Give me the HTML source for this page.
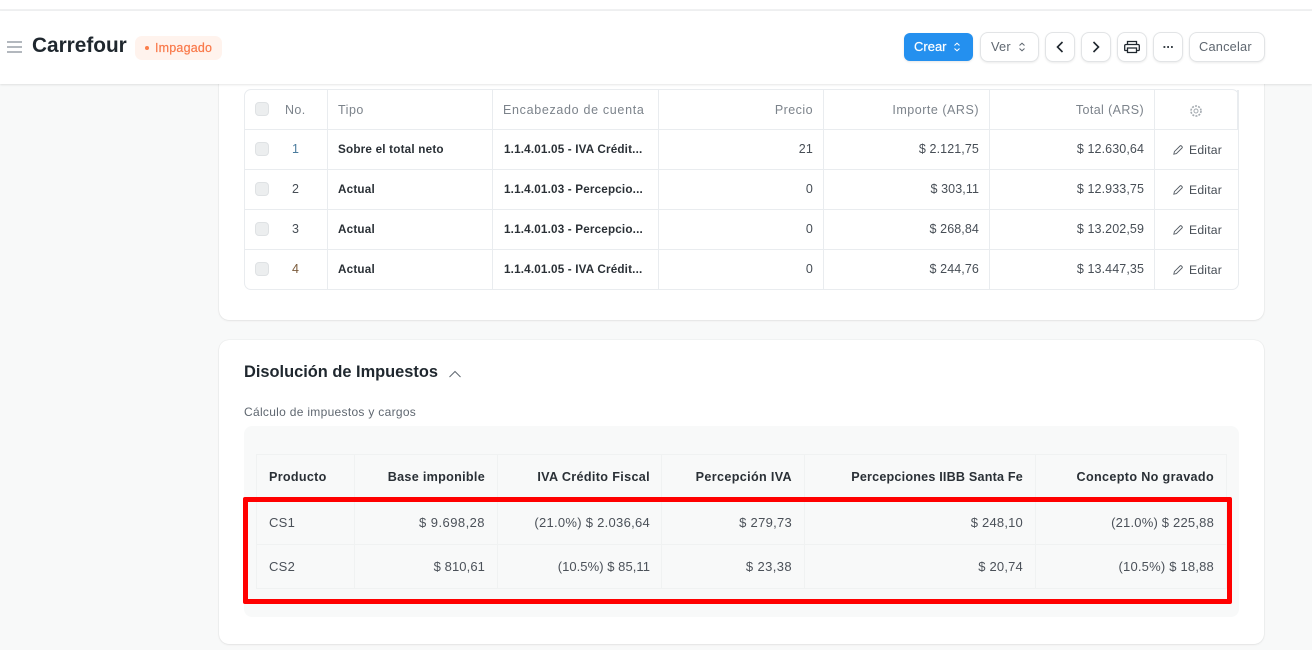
<!DOCTYPE html>
<html><head><meta charset="utf-8"><style>
*{box-sizing:border-box}
html,body{margin:0;padding:0}
body{width:1312px;height:650px;overflow:hidden;position:relative;background:#f8f9f9;font-family:"Liberation Sans",sans-serif;color:#474e56}
.a{position:absolute}
.t{position:absolute;white-space:nowrap;font-size:12.5px;line-height:16px;letter-spacing:.2px}
.r{text-align:right}
.card{position:absolute;left:219px;width:1045px;background:#fff;border-radius:10px;box-shadow:0 0 1px rgba(0,0,0,.18),0 1px 2px rgba(0,0,0,.06)}
.btn{position:absolute;top:32px;height:30px;background:#fff;border-radius:8px;border:1px solid #e2e4e6;box-shadow:0 1px 2px rgba(0,0,0,.08)}
.h{background:#e9ecef}
.cb{position:absolute;left:255px;width:14px;height:14px;background:#eceeef;border:1px solid #dfe2e4;border-radius:4px}
.hd{color:#7c838b}
.b{font-weight:700;font-size:11.7px;color:#2a3036;letter-spacing:.2px}
.th{font-weight:700;color:#2a3036;font-size:12.6px;letter-spacing:.3px}
.v{font-size:13px;letter-spacing:.28px;color:#4b5159}
svg{position:absolute;overflow:visible}
</style></head><body>

<!-- top strip + header -->
<div class="a" style="left:0;top:0;width:1312px;height:10px;background:#fff"></div>
<div class="a" style="left:0;top:9px;width:1312px;height:2px;background:#f0f1f2"></div>
<div class="a" style="left:0;top:11px;width:1312px;height:73px;background:#fff;box-shadow:0 1px 2px rgba(0,0,0,.1);z-index:5"></div>

<div style="position:absolute;z-index:6;left:0;top:0;width:1312px;height:85px">
<svg style="left:7px;top:41px" width="15" height="12"><path d="M0 1h15M0 6h15M0 11h15" stroke="#9aa1a8" stroke-width="1.4" fill="none"/></svg>
<div class="t" style="left:32px;top:33px;font-size:20.8px;line-height:26px;font-weight:700;color:#1f272e;letter-spacing:0">Carrefour</div>
<div class="a" style="left:135px;top:36px;width:87px;height:24px;border-radius:7px;background:#fff3ed"></div>
<div class="a" style="left:145px;top:46px;width:4px;height:4px;border-radius:50%;background:#fb7e4b"></div>
<div class="t" style="left:155px;top:40px;font-size:12.5px;font-weight:400;color:#f9794a;letter-spacing:.2px;-webkit-text-stroke:.2px #f9794a">Impagado</div>

<div class="a" style="left:904px;top:33px;width:69px;height:28px;background:#2490ef;border-radius:6px;box-shadow:0 1px 2px rgba(0,0,0,.1)"></div>
<div class="t" style="left:914px;top:39px;color:#fff;font-size:13px;-webkit-text-stroke:.2px #fff;letter-spacing:0">Crear</div>
<svg style="left:953px;top:42px" width="8" height="10"><path d="M1.5 3.5L4 1.2 6.5 3.5M1.5 6.5L4 8.8 6.5 6.5" stroke="#fff" stroke-width="1" fill="none"/></svg>

<div class="btn" style="left:980px;width:59px"></div>
<div class="t" style="left:991px;top:39px;font-size:12.8px;color:#5f6770;letter-spacing:.2px">Ver</div>
<svg style="left:1018px;top:42px" width="8" height="10"><path d="M1.5 3.5L4 1.2 6.5 3.5M1.5 6.5L4 8.8 6.5 6.5" stroke="#5f6770" stroke-width="1" fill="none"/></svg>

<div class="btn" style="left:1045px;width:30px"></div>
<svg style="left:1045px;top:32px" width="30" height="30"><path d="M17.5 10L12.5 15 17.5 20" stroke="#1f272e" stroke-width="1.6" fill="none"/></svg>
<div class="btn" style="left:1081px;width:30px"></div>
<svg style="left:1081px;top:32px" width="30" height="30"><path d="M12.5 10L17.5 15 12.5 20" stroke="#1f272e" stroke-width="1.6" fill="none"/></svg>
<div class="btn" style="left:1117px;width:30px"></div>
<svg style="left:1117px;top:32px" width="30" height="30"><path d="M10.5 12.5V9.5h9v3M10.5 18.5H8.5a.8.8 0 0 1-.8-.8v-3.9c0-.8.6-1.3 1.3-1.3h12c.7 0 1.3.5 1.3 1.3v3.9a.8.8 0 0 1-.8.8h-2M10.5 16h9v4.5h-9z" stroke="#1f272e" stroke-width="1.3" fill="none"/></svg>
<div class="btn" style="left:1153px;width:30px"></div>
<svg style="left:1153px;top:32px" width="30" height="30"><path d="M10.5 15h1.8M14.2 15h1.8M18 15h1.8" stroke="#1f272e" stroke-width="1.7" fill="none"/></svg>
<div class="btn" style="left:1189px;width:76px"></div>
<div class="t" style="left:1199px;top:39px;font-size:12.8px;color:#5f6770;letter-spacing:.2px">Cancelar</div>
</div>

<!-- Card 1 -->
<div class="card" style="top:60px;height:260px"></div>
<div class="a" style="left:244px;top:89px;width:995px;height:201px;border:1px solid #e9ecef;border-radius:7px;background:#fff"></div>
<div class="a h" style="left:245px;top:129px;width:993px;height:1px"></div>
<div class="a h" style="left:245px;top:169px;width:993px;height:1px"></div>
<div class="a h" style="left:245px;top:209px;width:993px;height:1px"></div>
<div class="a h" style="left:245px;top:249px;width:993px;height:1px"></div>
<div class="a h" style="left:327px;top:90px;width:1px;height:199px"></div>
<div class="a h" style="left:492px;top:90px;width:1px;height:199px"></div>
<div class="a h" style="left:658px;top:90px;width:1px;height:199px"></div>
<div class="a h" style="left:823px;top:90px;width:1px;height:199px"></div>
<div class="a h" style="left:989px;top:90px;width:1px;height:199px"></div>
<div class="a h" style="left:1154px;top:90px;width:1px;height:199px"></div>
<div class="a h" style="left:1237px;top:90px;width:2px;height:40px"></div>

<div class="cb" style="top:102px"></div><div class="cb" style="top:142px"></div><div class="cb" style="top:182px"></div><div class="cb" style="top:222px"></div><div class="cb" style="top:262px"></div>

<div class="t hd" style="left:285px;top:102px;letter-spacing:.4px">No.</div>
<div class="t hd" style="left:338px;top:102px;letter-spacing:.5px">Tipo</div>
<div class="t hd" style="left:503px;top:102px;letter-spacing:.68px">Encabezado de cuenta</div>
<div class="t hd r" style="right:499px;top:102px;letter-spacing:.45px">Precio</div>
<div class="t hd r" style="right:333px;top:102px;letter-spacing:.52px">Importe (ARS)</div>
<div class="t hd r" style="right:168px;top:102px;letter-spacing:.38px">Total (ARS)</div>
<svg style="left:1189px;top:104px" width="14" height="14" viewBox="0 0 14 14"><circle cx="7" cy="7" r="2" stroke="#a4aab0" fill="none"/><circle cx="7" cy="7" r="5" stroke="#a4aab0" stroke-width="1.6" stroke-dasharray="2 1.2" fill="none"/></svg>

<!-- rows -->
<div class="t" style="left:292px;top:141px;color:#4a7b9c">1</div>
<div class="t b" style="left:338px;top:142px">Sobre el total neto</div>
<div class="t b" style="left:504px;top:142px;letter-spacing:.17px">1.1.4.01.05 - IVA Crédit...</div>
<div class="t r" style="right:499px;top:141px">21</div>
<div class="t r" style="right:333px;top:141px;letter-spacing:.1px">$ 2.121,75</div>
<div class="t r" style="right:168px;top:141px;letter-spacing:.1px">$ 12.630,64</div>

<div class="t" style="left:292px;top:181px">2</div>
<div class="t b" style="left:338px;top:182px">Actual</div>
<div class="t b" style="left:504px;top:182px;letter-spacing:.17px">1.1.4.01.03 - Percepcio...</div>
<div class="t r" style="right:499px;top:181px">0</div>
<div class="t r" style="right:333px;top:181px;letter-spacing:.1px">$ 303,11</div>
<div class="t r" style="right:168px;top:181px;letter-spacing:.1px">$ 12.933,75</div>

<div class="t" style="left:292px;top:221px">3</div>
<div class="t b" style="left:338px;top:222px">Actual</div>
<div class="t b" style="left:504px;top:222px;letter-spacing:.17px">1.1.4.01.03 - Percepcio...</div>
<div class="t r" style="right:499px;top:221px">0</div>
<div class="t r" style="right:333px;top:221px;letter-spacing:.1px">$ 268,84</div>
<div class="t r" style="right:168px;top:221px;letter-spacing:.1px">$ 13.202,59</div>

<div class="t" style="left:292px;top:261px;color:#7a5a3a">4</div>
<div class="t b" style="left:338px;top:262px">Actual</div>
<div class="t b" style="left:504px;top:262px;letter-spacing:.17px">1.1.4.01.05 - IVA Crédit...</div>
<div class="t r" style="right:499px;top:261px">0</div>
<div class="t r" style="right:333px;top:261px;letter-spacing:.1px">$ 244,76</div>
<div class="t r" style="right:168px;top:261px;letter-spacing:.1px">$ 13.447,35</div>

<svg style="left:1173px;top:145px" width="10" height="10"><path d="M.8 9.2l.6-2.6L7 1a1 1 0 0 1 1.4 0l.6.6a1 1 0 0 1 0 1.4L3.4 8.6z" stroke="#555c64" stroke-width=".9" fill="none"/></svg>
<svg style="left:1173px;top:185px" width="10" height="10"><path d="M.8 9.2l.6-2.6L7 1a1 1 0 0 1 1.4 0l.6.6a1 1 0 0 1 0 1.4L3.4 8.6z" stroke="#555c64" stroke-width=".9" fill="none"/></svg>
<svg style="left:1173px;top:225px" width="10" height="10"><path d="M.8 9.2l.6-2.6L7 1a1 1 0 0 1 1.4 0l.6.6a1 1 0 0 1 0 1.4L3.4 8.6z" stroke="#555c64" stroke-width=".9" fill="none"/></svg>
<svg style="left:1173px;top:265px" width="10" height="10"><path d="M.8 9.2l.6-2.6L7 1a1 1 0 0 1 1.4 0l.6.6a1 1 0 0 1 0 1.4L3.4 8.6z" stroke="#555c64" stroke-width=".9" fill="none"/></svg>
<div class="t" style="left:1189px;top:142px;font-size:12.2px">Editar</div>
<div class="t" style="left:1189px;top:182px;font-size:12.2px">Editar</div>
<div class="t" style="left:1189px;top:222px;font-size:12.2px">Editar</div>
<div class="t" style="left:1189px;top:262px;font-size:12.2px">Editar</div>

<!-- Card 2 -->
<div class="card" style="top:340px;height:304px"></div>
<div class="t" style="left:244px;top:362px;font-size:16.4px;line-height:20px;font-weight:700;color:#1f272e;letter-spacing:0">Disolución de Impuestos</div>
<svg style="left:449px;top:370px" width="12" height="8"><path d="M.5 7L6 1.5 11.5 7" stroke="#5f6770" stroke-width="1" fill="none"/></svg>
<div class="t" style="left:244px;top:404px;font-size:12px;color:#5f6770;letter-spacing:.3px">Cálculo de impuestos y cargos</div>

<div class="a" style="left:244px;top:426px;width:995px;height:191px;background:#f8f9f9;border-radius:8px"></div>
<div class="a" style="left:256px;top:454px;width:971px;height:135px;border:1px solid #f0f2f2"></div>
<div class="a" style="left:257px;top:544px;width:969px;height:1px;background:#f0f2f2"></div>
<div class="a" style="left:354px;top:454px;width:1px;height:135px;background:#f0f2f2"></div>
<div class="a" style="left:497px;top:454px;width:1px;height:135px;background:#f0f2f2"></div>
<div class="a" style="left:661px;top:454px;width:1px;height:135px;background:#f0f2f2"></div>
<div class="a" style="left:804px;top:454px;width:1px;height:135px;background:#f0f2f2"></div>
<div class="a" style="left:1035px;top:454px;width:1px;height:135px;background:#f0f2f2"></div>

<div class="t th" style="left:269px;top:469px">Producto</div>
<div class="t th r" style="right:827px;top:469px">Base imponible</div>
<div class="t th r" style="right:662px;top:469px;letter-spacing:.35px">IVA Crédito Fiscal</div>
<div class="t th r" style="right:520px;top:469px;letter-spacing:.35px">Percepción IVA</div>
<div class="t th r" style="right:289px;top:469px;letter-spacing:.2px">Percepciones IIBB Santa Fe</div>
<div class="t th r" style="right:98px;top:469px;letter-spacing:.35px">Concepto No gravado</div>

<div class="t v" style="left:269px;top:515px">CS1</div>
<div class="t v r" style="right:827px;top:515px;letter-spacing:.45px">$ 9.698,28</div>
<div class="t v r" style="right:662px;top:515px">(21.0%) $ 2.036,64</div>
<div class="t v r" style="right:520px;top:515px">$ 279,73</div>
<div class="t v r" style="right:289px;top:515px;letter-spacing:.2px">$ 248,10</div>
<div class="t v r" style="right:98px;top:515px;letter-spacing:.2px">(21.0%) $ 225,88</div>

<div class="t v" style="left:269px;top:559px">CS2</div>
<div class="t v r" style="right:827px;top:559px;letter-spacing:.1px">$ 810,61</div>
<div class="t v r" style="right:662px;top:559px;letter-spacing:.05px">(10.5%) $ 85,11</div>
<div class="t v r" style="right:520px;top:559px;letter-spacing:.4px">$ 23,38</div>
<div class="t v r" style="right:289px;top:559px;letter-spacing:.2px">$ 20,74</div>
<div class="t v r" style="right:98px;top:559px;letter-spacing:.2px">(10.5%) $ 18,88</div>

<!-- red annotation -->
<div class="a" style="left:243px;top:497px;width:989px;height:107px;border:5px solid #f00;border-radius:2px"></div>
</body></html>
